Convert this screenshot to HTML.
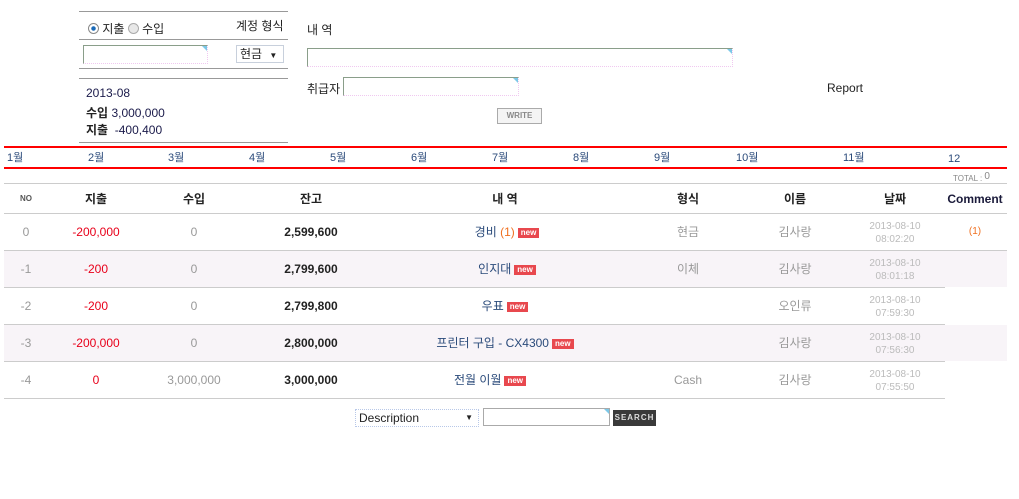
<!DOCTYPE html>
<html><head><meta charset="utf-8"><style>
body{margin:0;width:1019px;height:499px;background:#fff;position:relative;overflow:hidden;font-family:"Liberation Sans","Noto Sans CJK KR",sans-serif;font-size:12px;color:#222}
.a{position:absolute;white-space:nowrap}
.c{position:absolute;white-space:nowrap;width:200px;text-align:center;line-height:14px}
.h{position:absolute;height:1px;background:#999}
.g{position:absolute;height:1px;background:#ccc}
.inp{position:absolute;border-top:1px solid #8a9e8a;border-left:1px solid #8a9e8a;border-right:1px dotted #f0c8f0;border-bottom:1px dotted #f0c8f0;box-sizing:border-box}
.inp:after{content:"";position:absolute;right:0;top:0;border-top:5px solid #7cc8e8;border-left:5px solid transparent}
.shade{position:absolute;background:#f8f4f8}
.new{display:inline-block;background:#e8484e;color:#fff;font-size:8px;font-weight:bold;padding:0 3px;line-height:10px;vertical-align:1px;margin-left:3px}
.m{position:absolute;top:151px;color:#2a4a7a;font-size:11px;line-height:14px;height:14px}
.red{color:#e8001a}.gr{color:#999}.blue{color:#2a4a7a}.dt{color:#bbb;font-size:10px}
</style></head><body>
<div class="h" style="left:79px;top:11px;width:209px"></div>
<div class="a" style="left:88px;top:20px"><span style="display:inline-block;width:11px;height:11px;border-radius:50%;border:1px solid #888;box-sizing:border-box;background:radial-gradient(#1a6ab8 30%,#fff 40%);vertical-align:-1px"></span> 지출 <span style="display:inline-block;width:11px;height:11px;border-radius:50%;border:1px solid #aaa;box-sizing:border-box;background:#e8e8e8;vertical-align:-1px"></span> 수입</div>
<div class="a" style="left:236px;top:17px">계정 형식</div>
<div class="h" style="left:79px;top:39px;width:209px"></div>
<div class="inp" style="left:83px;top:45px;width:125px;height:19px"></div>
<div class="a" style="left:236px;top:45px;width:48px;height:18px;border:1px solid #c8d0dc;box-sizing:border-box;padding-left:3px;line-height:16px">현금 <span style="font-size:8px;margin-left:4px">▼</span></div>
<div class="h" style="left:79px;top:68px;width:209px"></div>
<div class="h" style="left:79px;top:78px;width:209px"></div>
<div class="a" style="left:86px;top:86px;color:#1a1a4a">2013-08</div>
<div class="a" style="left:86px;top:104px"><b>수입</b> <span style="color:#1a1a4a">3,000,000</span></div>
<div class="a" style="left:86px;top:121px"><b>지출</b> &nbsp;<span style="color:#1a1a4a">-400,400</span></div>
<div class="h" style="left:79px;top:142px;width:209px"></div>
<div class="a" style="left:307px;top:21px">내 역</div>
<div class="inp" style="left:307px;top:48px;width:426px;height:19px"></div>
<div class="a" style="left:307px;top:80px">취급자</div>
<div class="inp" style="left:343px;top:77px;width:176px;height:19px"></div>
<div class="a" style="left:497px;top:108px;width:45px;height:16px;border:1px solid #aaa;box-sizing:border-box;background:#f4f4f4;color:#888;font-size:8px;font-weight:bold;text-align:center;line-height:14px">WRITE</div>
<div class="a" style="left:827px;top:81px">Report</div>
<div class="a" style="left:4px;top:146px;width:1003px;height:2px;background:#f00"></div>
<div class="a" style="left:4px;top:167px;width:1003px;height:2px;background:#f00"></div>
<div class="m" style="left:7px">1월</div><div class="m" style="left:88px">2월</div><div class="m" style="left:168px">3월</div><div class="m" style="left:249px">4월</div><div class="m" style="left:330px">5월</div><div class="m" style="left:411px">6월</div><div class="m" style="left:492px">7월</div><div class="m" style="left:573px">8월</div><div class="m" style="left:654px">9월</div><div class="m" style="left:736px">10월</div><div class="m" style="left:843px">11월</div><div class="m" style="left:948px;top:152px">12</div>
<div class="a" style="left:953px;top:171px;font-size:8px;color:#888">TOTAL : <span style="font-size:10px;vertical-align:2px">0</span></div>
<div class="g" style="left:4px;top:183px;width:1003px"></div>
<div class="shade" style="left:4px;top:251px;width:1003px;height:36px"></div>
<div class="shade" style="left:4px;top:325px;width:1003px;height:36px"></div>
<div class="g" style="left:4px;top:213px;width:1003px"></div>
<div class="g" style="left:4px;top:250px;width:1003px"></div>
<div class="g" style="left:4px;top:287px;width:941px"></div>
<div class="g" style="left:4px;top:324px;width:941px"></div>
<div class="g" style="left:4px;top:361px;width:941px"></div>
<div class="g" style="left:4px;top:398px;width:941px"></div>
<div style="position:absolute;top:192px;left:0;font-weight:bold">
<div class="c" style="left:-74px;font-size:8px;color:#555">NO</div>
<div class="c" style="left:-4px">지출</div><div class="c" style="left:94px">수입</div><div class="c" style="left:211px">잔고</div><div class="c" style="left:405px">내 역</div><div class="c" style="left:588px">형식</div><div class="c" style="left:695px">이름</div><div class="c" style="left:795px">날짜</div><div class="c" style="left:875px;color:#1a1a3a">Comment</div></div>
<div style="position:absolute;top:225px;left:0">
<div class="c gr" style="left:-74px">0</div><div class="c red" style="left:-4px">-200,000</div><div class="c gr" style="left:94px">0</div><div class="c" style="left:211px;font-weight:bold">2,599,600</div><div class="c blue" style="left:407px">경비 <span style="color:#f07020">(1)</span><span class="new">new</span></div><div class="c gr" style="left:588px">현금</div><div class="c gr" style="left:695px">김사랑</div><div class="c dt" style="left:795px;top:-5px;line-height:13px">2013-08-10<br>08:02:20</div><div class="c" style="left:875px;color:#f07020;font-size:10px">(1)</div></div>
<div style="position:absolute;top:262px;left:0">
<div class="c gr" style="left:-74px">-1</div><div class="c red" style="left:-4px">-200</div><div class="c gr" style="left:94px">0</div><div class="c" style="left:211px;font-weight:bold">2,799,600</div><div class="c blue" style="left:407px">인지대<span class="new">new</span></div><div class="c gr" style="left:588px">이체</div><div class="c gr" style="left:695px">김사랑</div><div class="c dt" style="left:795px;top:-5px;line-height:13px">2013-08-10<br>08:01:18</div></div>
<div style="position:absolute;top:299px;left:0">
<div class="c gr" style="left:-74px">-2</div><div class="c red" style="left:-4px">-200</div><div class="c gr" style="left:94px">0</div><div class="c" style="left:211px;font-weight:bold">2,799,800</div><div class="c blue" style="left:405px">우표<span class="new">new</span></div><div class="c gr" style="left:695px">오인류</div><div class="c dt" style="left:795px;top:-5px;line-height:13px">2013-08-10<br>07:59:30</div></div>
<div style="position:absolute;top:336px;left:0">
<div class="c gr" style="left:-74px">-3</div><div class="c red" style="left:-4px">-200,000</div><div class="c gr" style="left:94px">0</div><div class="c" style="left:211px;font-weight:bold">2,800,000</div><div class="c blue" style="left:405px">프린터 구입 - CX4300<span class="new">new</span></div><div class="c gr" style="left:695px">김사랑</div><div class="c dt" style="left:795px;top:-5px;line-height:13px">2013-08-10<br>07:56:30</div></div>
<div style="position:absolute;top:373px;left:0">
<div class="c gr" style="left:-74px">-4</div><div class="c red" style="left:-4px">0</div><div class="c gr" style="left:94px">3,000,000</div><div class="c" style="left:211px;font-weight:bold">3,000,000</div><div class="c blue" style="left:390px">전월 이월<span class="new">new</span></div><div class="c gr" style="left:588px">Cash</div><div class="c gr" style="left:695px">김사랑</div><div class="c dt" style="left:795px;top:-5px;line-height:13px">2013-08-10<br>07:55:50</div></div>
<div class="a" style="left:355px;top:409px;width:124px;height:18px;border:1px dotted #b8c8e8;box-sizing:border-box;padding-left:3px;line-height:16px">Description<span style="position:absolute;right:5px;font-size:8px">▼</span></div>
<div class="inp" style="left:483px;top:408px;width:127px;height:18px;border:1px solid #aaa"></div>
<div class="a" style="left:613px;top:410px;width:43px;height:16px;background:#3a3a3a;color:#ddd;font-size:8px;font-weight:bold;text-align:center;line-height:16px;letter-spacing:1px">SEARCH</div>
</body></html>
